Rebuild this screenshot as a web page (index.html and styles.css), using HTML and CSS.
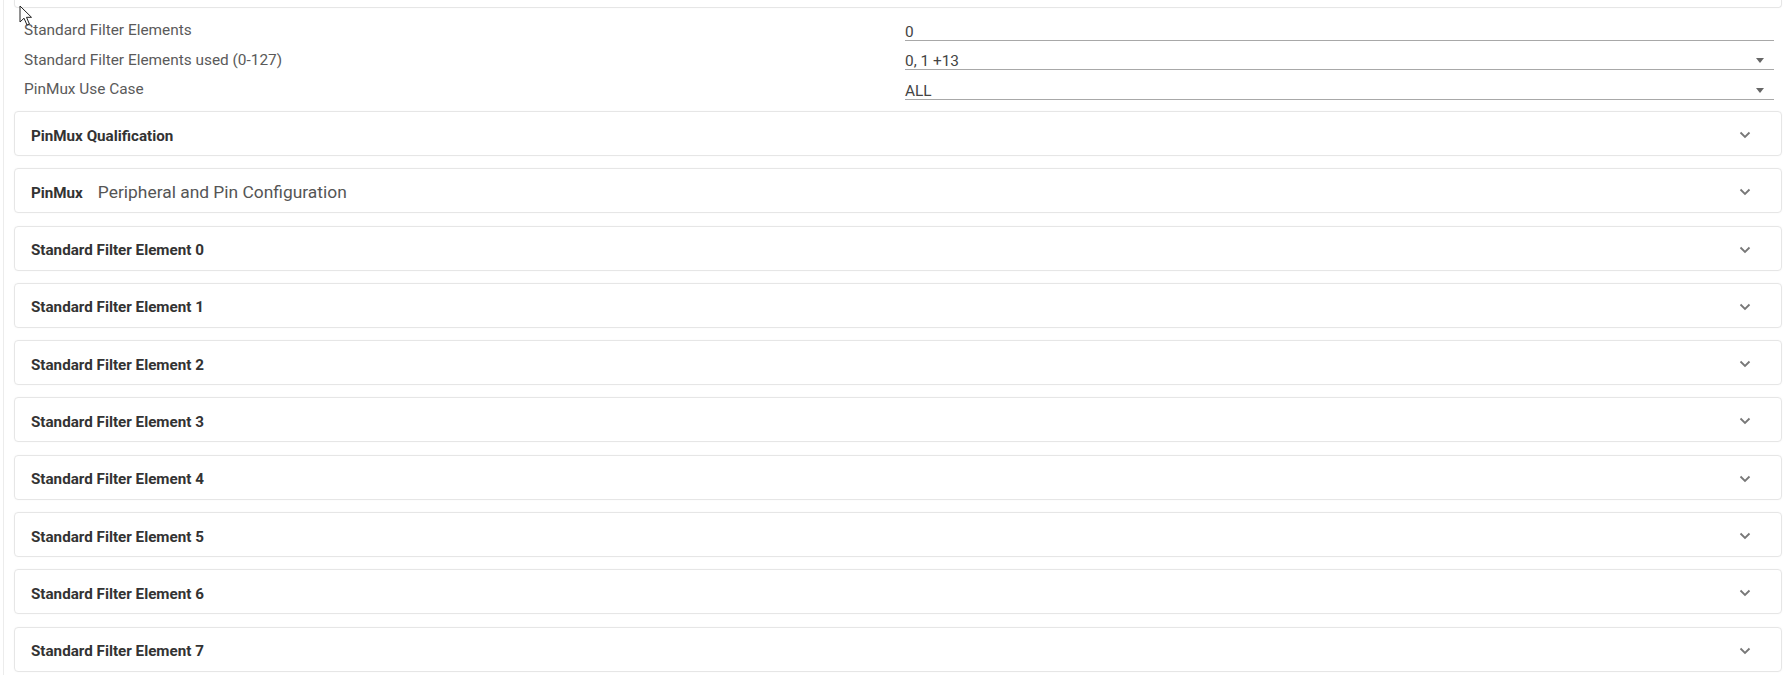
FILE: index.html
```html
<!DOCTYPE html>
<html lang="en">
  <head>
    <meta charset="utf-8">
    <meta name="viewport" content="width=device-width, initial-scale=1">
    <title>MCAN filter settings</title>
    <link rel="stylesheet" href="styles.css">
  </head>

  <body>
    <div id="cfgPage">
      <div id="cfgPanel">
        <div class="cfgCard cfgStub"></div>

        <div class="cfgFields">
          <div class="cfgRow">
            <span class="cfgLabel">Standard Filter Elements</span>
            <div class="cfgInput">0</div>
          </div>
          <div class="cfgRow">
            <span class="cfgLabel">Standard Filter Elements used (0-127)</span>
            <div class="cfgInput cfgSelect">0, 1 +13</div>
          </div>
          <div class="cfgRow">
            <span class="cfgLabel">PinMux Use Case</span>
            <div class="cfgInput cfgSelect">ALL</div>
          </div>
        </div>

        <div class="cfgCard"><div class="cfgHead"><b>PinMux Qualification</b><svg class="cfgChevron" viewBox="0 0 12 8"><polyline points="1.5,1.5 6,6 10.5,1.5"/></svg></div></div>
        <div class="cfgCard"><div class="cfgHead"><b>PinMux</b><span class="cfgSub">Peripheral and Pin Configuration</span><svg class="cfgChevron" viewBox="0 0 12 8"><polyline points="1.5,1.5 6,6 10.5,1.5"/></svg></div></div>
        <div class="cfgCard"><div class="cfgHead"><b>Standard Filter Element 0</b><svg class="cfgChevron" viewBox="0 0 12 8"><polyline points="1.5,1.5 6,6 10.5,1.5"/></svg></div></div>
        <div class="cfgCard"><div class="cfgHead"><b>Standard Filter Element 1</b><svg class="cfgChevron" viewBox="0 0 12 8"><polyline points="1.5,1.5 6,6 10.5,1.5"/></svg></div></div>
        <div class="cfgCard"><div class="cfgHead"><b>Standard Filter Element 2</b><svg class="cfgChevron" viewBox="0 0 12 8"><polyline points="1.5,1.5 6,6 10.5,1.5"/></svg></div></div>
        <div class="cfgCard"><div class="cfgHead"><b>Standard Filter Element 3</b><svg class="cfgChevron" viewBox="0 0 12 8"><polyline points="1.5,1.5 6,6 10.5,1.5"/></svg></div></div>
        <div class="cfgCard"><div class="cfgHead"><b>Standard Filter Element 4</b><svg class="cfgChevron" viewBox="0 0 12 8"><polyline points="1.5,1.5 6,6 10.5,1.5"/></svg></div></div>
        <div class="cfgCard"><div class="cfgHead"><b>Standard Filter Element 5</b><svg class="cfgChevron" viewBox="0 0 12 8"><polyline points="1.5,1.5 6,6 10.5,1.5"/></svg></div></div>
        <div class="cfgCard"><div class="cfgHead"><b>Standard Filter Element 6</b><svg class="cfgChevron" viewBox="0 0 12 8"><polyline points="1.5,1.5 6,6 10.5,1.5"/></svg></div></div>
        <div class="cfgCard"><div class="cfgHead"><b>Standard Filter Element 7</b><svg class="cfgChevron" viewBox="0 0 12 8"><polyline points="1.5,1.5 6,6 10.5,1.5"/></svg></div></div>
      </div>

      <!-- mouse pointer that was on screen -->
      <svg class="cfgCursor" viewBox="0 0 14 22"><path d="M1 1 L1 17 L5 13.2 L8 20 L10.4 19 L7.5 12.3 L12.5 12.3 Z"/></svg>
    </div>
  </body>
</html>
```

FILE: styles.css
```css
html, body {
  margin: 0;
  background: #fff;
}

body {
  font-family: Roboto, "Liberation Sans", sans-serif;
  font-size: 15.4px;
  color: #333;
  overflow: hidden;
}

#cfgPage {
  position: relative;
  padding-left: 3px;
  height: 675px;
}

#cfgPanel {
  border-left: 1px solid #ececec;
  padding: 0 6px 0 10px;
  height: 100%;
}

.cfgCard {
  border: 1px solid #e6e6e6;
  border-radius: 4px;
  box-shadow: 0 0 2px rgba(0, 0, 0, 0.04);
  margin-bottom: 12.3px;
}

.cfgStub {
  height: 7px;
  border-top: none;
  border-radius: 0 0 4px 4px;
  margin-bottom: 0;
}

.cfgFields {
  padding: 7px 8px 7.5px 10px;
}

.cfgRow {
  display: grid;
  grid-template-columns: 881px 1fr;
  height: 29.5px;
  align-items: center;
}

.cfgLabel {
  color: #5a5a5a;
  font-size: 15.4px;
  line-height: 18px;
  margin-top: 1px;
}

.cfgInput {
  position: relative;
  align-self: end;
  height: 19px;
  line-height: 22px;
  margin-bottom: 4px;
  border-bottom: 1.5px solid #a8a8a8;
  color: #444;
  font-size: 15.4px;
}

.cfgSelect::after {
  content: "";
  position: absolute;
  right: 10px;
  top: 8px;
  border-left: 4.5px solid transparent;
  border-right: 4.5px solid transparent;
  border-top: 5px solid #666;
}

.cfgHead {
  display: flex;
  align-items: center;
  height: 43px;
  padding: 3px 30px 0 16px;
  box-sizing: border-box;
}

.cfgHead b {
  font-weight: 700;
  color: #333;
  font-size: 15.2px;
  line-height: 18px;
  margin-top: 1px;
}

.cfgSub {
  margin-left: 15px;
  font-size: 17.4px;
  color: #555;
}

.cfgChevron {
  margin-left: auto;
  width: 12px;
  height: 8px;
  fill: none;
  stroke: #777;
  stroke-width: 1.8;
}

.cfgCursor {
  position: absolute;
  left: 19px;
  top: 5px;
  width: 14px;
  height: 22px;
  fill: #fff;
  stroke: #222;
  stroke-width: 1;
}
```
